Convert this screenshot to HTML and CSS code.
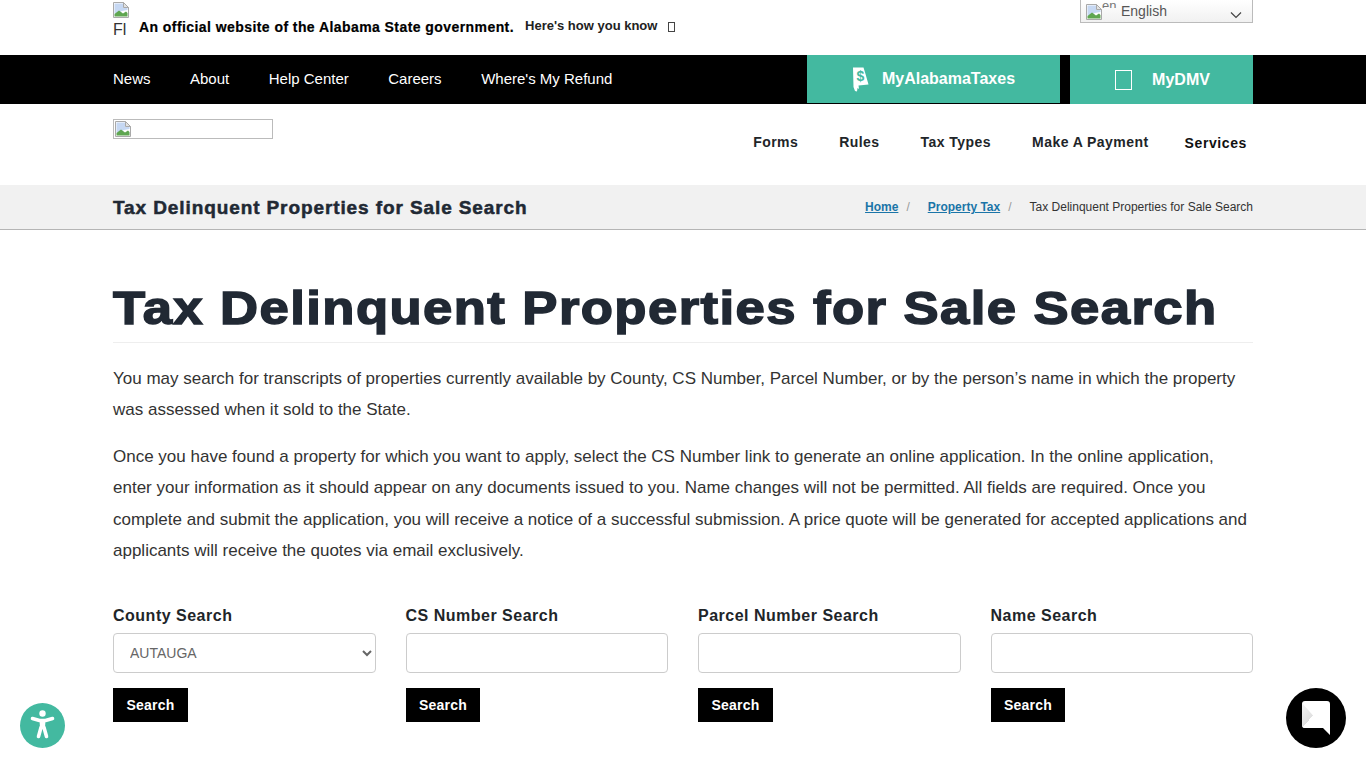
FILE: index.html
```html
<!DOCTYPE html>
<html>

<head>
    <title>Tax Delinquent Properties for Sale Search</title>
    <link rel="stylesheet" href="styles.css">
</head>

<body>
    <div class="topbar">
        <div class="container topbar-inner">
            <div class="official">
                <div class="flag-img">
                    <svg class="broken" viewBox="0 0 16 16"><use href="#broken-img"></use></svg>
                    <span class="flag-alt">Fl</span>
                </div>
                <strong class="official-text">An official website of the Alabama State government.</strong>
                <a class="how-link" href="#">Here's how you know</a>
                <span class="tofu"></span>
            </div>
            <div class="lang">
                <svg class="broken" viewBox="0 0 16 16"><use href="#broken-img"></use></svg>
                <span class="lang-alt">en</span>
                <span class="lang-name">English</span>
                <svg class="lang-arrow" viewBox="0 0 12 8"><path d="M1 1.500 6 6.500 11 1.500" fill="none" stroke="#444" stroke-width="1.200"/></svg>
            </div>
        </div>
    </div>

    <div class="blacknav">
        <div class="container blacknav-inner">
            <nav class="blacknav-links">
                <a href="#">News</a>
                <a href="#">About</a>
                <a href="#">Help Center</a>
                <a href="#">Careers</a>
                <a href="#">Where's My Refund</a>
            </nav>
            <div class="nav-btns">
                <a class="teal-btn teal-taxes" href="#">
                    <svg class="state-icon" viewBox="0 0 17 25">
                        <path d="M1 0.500H11.500L13.500 7 16.500 17.500 6.500 18.500 7 22 5.500 21 5 24.500 3 24 1.500 20Z" fill="#fff"/>
                        <text x="8.500" y="14" text-anchor="middle" class="state-icon-s">$</text>
                    </svg>
                    MyAlabamaTaxes
                </a>
                <a class="teal-btn teal-dmv" href="#"><span class="dmv-box"></span>MyDMV</a>
            </div>
        </div>
    </div>

    <header class="mainhead">
        <div class="container mainhead-inner">
            <div class="logo">
                <svg class="broken" viewBox="0 0 16 16"><use href="#broken-img"></use></svg>
            </div>
            <nav class="mainmenu">
                <a href="#">Forms</a>
                <a href="#">Rules</a>
                <a href="#">Tax Types</a>
                <a href="#">Make A Payment</a>
                <a class="services" href="#">Services</a>
            </nav>
        </div>
    </header>

    <div class="titlebar">
        <div class="container titlebar-inner">
            <h2>Tax Delinquent Properties for Sale Search</h2>
            <ol class="crumbs">
                <li><a href="#">Home</a><span class="sep">/</span></li>
                <li><a href="#">Property Tax</a><span class="sep">/</span></li>
                <li>Tax Delinquent Properties for Sale Search</li>
            </ol>
        </div>
    </div>

    <main class="container content">
        <h1><span class="h1-text">Tax Delinquent Properties for Sale Search</span></h1>
        <p>You may search for transcripts of properties currently available by County, CS Number, Parcel Number, or by the person’s name in which the property was assessed when it sold to the State.</p>
        <p>Once you have found a property for which you want to apply, select the CS Number link to generate an online application. In the online application, enter your information as it should appear on any documents issued to you. Name changes will not be permitted. All fields are required. Once you complete and submit the application, you will receive a notice of a successful submission. A price quote will be generated for accepted applications and applicants will receive the quotes via email exclusively.</p>

        <div class="search-grid">
            <form class="search-col">
                <label for="county">County Search</label>
                <select id="county">
                    <option>AUTAUGA</option>
                    <option>BALDWIN</option>
                </select>
                <button type="button">Search</button>
            </form>
            <form class="search-col">
                <label for="csNumber">CS Number Search</label>
                <input type="text" id="csNumber">
                <button type="button">Search</button>
            </form>
            <form class="search-col">
                <label for="parcel">Parcel Number Search</label>
                <input type="text" id="parcel">
                <button type="button">Search</button>
            </form>
            <form class="search-col">
                <label for="personName">Name Search</label>
                <input type="text" id="personName">
                <button type="button">Search</button>
            </form>
        </div>
    </main>

    <a class="a11y" href="#" aria-label="Accessibility">
        <svg viewBox="0 0 45 45">
            <circle cx="22.500" cy="10.500" r="3.200" fill="#fff"/>
            <path d="M12.500 15.500 19.500 17.500H25.500L32.500 15.500" fill="none" stroke="#fff" stroke-width="3.600" stroke-linecap="round" stroke-linejoin="round"/>
            <path d="M19.500 17.500H25.500L25 25H20Z" fill="#fff"/>
            <path d="M21 24.500 18.500 33.500M24 24.500 26.500 33.500" fill="none" stroke="#fff" stroke-width="3.600" stroke-linecap="round"/>
        </svg>
    </a>

    <a class="chat" href="#" aria-label="Chat">
        <svg viewBox="0 0 60 60">
            <defs>
                <linearGradient id="chatShadeFlip" x1="0" y1="0" x2="1" y2="1">
                    <stop offset="0" stop-color="#f4f4f4"/>
                    <stop offset="0.500" stop-color="#e0e0e0"/>
                    <stop offset="0.500" stop-color="#fff"/>
                </linearGradient>
            </defs>
            <path d="M19 13H41Q44 13 44 16V47L37 40H19Q16 40 16 37V16Q16 13 19 13Z" fill="#fff"/>
            <path d="M16 15 38 40H19Q16 40 16 37Z" fill="url(#chatShadeFlip)"/>
        </svg>
    </a>

    <svg class="defs-only">
        <symbol id="broken-img" viewBox="0 0 16 16">
            <path d="M.5.5H10.500L15.500 5.500V15.500H.5Z" fill="#fff" stroke="#a9a9a9"/>
            <path d="M10.500.5V5.500H15.500Z" fill="#e3e3e3" stroke="#a9a9a9"/>
            <path d="M1.500 1.500H10V6H14.500V8L9 9 1.500 12Z" fill="#c6d8f3"/>
            <path d="M1.500 14.500V12L6 8.500 10 11.500 13 9.500 14.500 11V14.500Z" fill="#5fa651"/>
        </symbol>
    </svg>
</body>

</html>
```

FILE: styles.css
```css
body {
    font-family: "Liberation Sans", Arial, sans-serif;
    margin: 0;
    color: #212529;
    background-color: #fff;
}

a {
    text-decoration: none;
}

.container {
    width: 1140px;
    margin: 0 auto;
}

.broken {
    display: block;
    width: 16px;
    height: 16px;
    flex: none;
}

.defs-only {
    display: none;
}

/* top strip */
.topbar {
    height: 55px;
    overflow: hidden;
}

.topbar-inner {
    display: flex;
    justify-content: space-between;
    align-items: flex-start;
}

.official {
    display: flex;
    align-items: center;
    padding-top: 2px;
}

.flag-img {
    width: 16px;
    height: 40px;
    margin-right: 10px;
    overflow: hidden;
}

.flag-alt {
    display: block;
    margin-top: 3px;
    font-size: 16px;
    line-height: 18px;
    color: #333;
}

.official-text {
    font-size: 14px;
    letter-spacing: 0.43px;
    color: #000;
    margin-top: 10px;
    -webkit-text-stroke: 0.2px #000;
}

.how-link {
    font-size: 13px;
    font-weight: bold;
    color: #222;
    margin-left: 11px;
    margin-top: 7px;
}

.tofu {
    width: 5px;
    height: 8px;
    border: 1px solid #444;
    margin-left: 11px;
    margin-top: 10px;
}

.lang {
    display: flex;
    align-items: flex-start;
    box-sizing: border-box;
    width: 173px;
    height: 24px;
    margin-top: -1px;
    padding: 4px 0 0 5px;
    border: 1px solid #bbb;
    background: linear-gradient(#fff, #f1f1f1);
    position: relative;
}

.lang-alt {
    width: 19px;
    height: 6px;
    margin-top: -2px;
    font-size: 13px;
    line-height: 8px;
    color: #777;
    overflow: hidden;
}

.lang-name {
    font-size: 14px;
    line-height: 14px;
    color: #555;
}

.lang-arrow {
    position: absolute;
    right: 10px;
    top: 11px;
    width: 12px;
    height: 8px;
}

/* black bar */
.blacknav {
    background-color: #000;
    height: 49px;
}

.blacknav-inner {
    display: flex;
    justify-content: space-between;
    height: 49px;
}

.blacknav-links {
    display: flex;
    align-items: center;
    gap: 39.500px;
    padding-bottom: 2px;
}

.blacknav-links a {
    color: #fff;
    font-size: 15px;
}

.nav-btns {
    display: flex;
    gap: 10px;
}

.teal-btn {
    display: flex;
    align-items: center;
    justify-content: center;
    box-sizing: border-box;
    height: 49px;
    background-color: #43b9a0;
    color: #fff;
    font-size: 16px;
    font-weight: bold;
}

.teal-taxes {
    width: 253px;
    height: 48px;
    gap: 13px;
}

.teal-dmv {
    width: 183px;
    gap: 20px;
    padding-left: 2px;
}

.state-icon {
    width: 17px;
    height: 25px;
}

.state-icon-s {
    font-size: 14px;
    font-weight: bold;
    fill: #43b9a0;
}

.dmv-box {
    width: 15px;
    height: 18px;
    border: 1px solid #fff;
}

/* logo and main menu */
.mainhead {
    height: 81px;
}

.mainhead-inner {
    display: flex;
    justify-content: space-between;
    align-items: flex-start;
}

.logo {
    box-sizing: border-box;
    width: 160px;
    height: 20px;
    margin-top: 15px;
    padding: 1px;
    border: 1px solid #bbb;
}

.mainmenu {
    display: flex;
    align-items: center;
    gap: 41px;
    margin-top: 29px;
    padding-right: 6px;
}

.mainmenu a {
    color: #212529;
    font-size: 14px;
    font-weight: bold;
    letter-spacing: 0.45px;
}

.mainmenu a.services {
    color: #111;
    margin-left: -5px;
    margin-top: 2px;
    letter-spacing: 0.6px;
}

/* page title band */
.titlebar {
    box-sizing: border-box;
    height: 45px;
    background-color: #f1f1f1;
    border-bottom: 1px solid #b5b5b5;
}

.titlebar-inner {
    display: flex;
    justify-content: space-between;
    align-items: center;
    height: 44px;
}

.titlebar h2 {
    margin: 2px 0 0;
    font-size: 19px;
    letter-spacing: 0.9px;
    color: #212934;
    -webkit-text-stroke: 0.5px #212934;
}

.crumbs {
    display: flex;
    margin: 0;
    padding: 0;
    list-style: none;
    font-size: 12px;
    color: #333;
}

.crumbs a {
    color: #1b75a8;
    font-weight: bold;
    text-decoration: underline;
}

.sep {
    color: #999;
    margin: 0 18px 0 8px;
}

/* main text */
.content {
    padding-top: 48px;
}

.content h1 {
    margin: 0 0 20px;
    padding-bottom: 4px;
    font-size: 47px;
    line-height: 60px;
    color: #212934;
    border-bottom: 1px solid #eee;
}

.h1-text {
    display: inline-block;
    letter-spacing: 1.270px;
    -webkit-text-stroke: 1.500px #212934;
    transform: scaleX(1.12);
    transform-origin: left center;
}

.content p {
    margin: 0 0 15px;
    font-size: 17px;
    line-height: 31.400px;
    color: #333;
}

/* search forms */
.search-grid {
    display: grid;
    grid-template-columns: repeat(4, 1fr);
    gap: 30px;
    margin-top: 38px;
}

.search-col label {
    display: block;
    margin-bottom: 5px;
    font-size: 16px;
    line-height: 24px;
    font-weight: bold;
    letter-spacing: 0.5px;
}

.search-col input,
.search-col select {
    display: block;
    box-sizing: border-box;
    width: 100%;
    height: 40px;
    border: 1px solid #ccc;
    border-radius: 4px;
    background-color: #fff;
    font-family: inherit;
    font-size: 14px;
    color: #666;
}

.search-col select {
    padding-left: 12px;
}

.search-col button {
    display: block;
    margin-top: 15px;
    height: 34px;
    padding: 0 13.500px;
    border: none;
    background-color: #000;
    color: #fff;
    font-family: inherit;
    font-size: 14px;
    font-weight: bold;
    letter-spacing: 0.2px;
}

/* floating buttons */
.a11y {
    position: fixed;
    left: 20px;
    top: 703px;
    width: 45px;
    height: 45px;
    border-radius: 50%;
    background-color: #43b9a0;
}

.chat {
    position: fixed;
    left: 1286px;
    top: 688px;
    width: 60px;
    height: 60px;
    border-radius: 50%;
    background-color: #000;
}

.a11y svg,
.chat svg {
    display: block;
    width: 100%;
    height: 100%;
}
```
